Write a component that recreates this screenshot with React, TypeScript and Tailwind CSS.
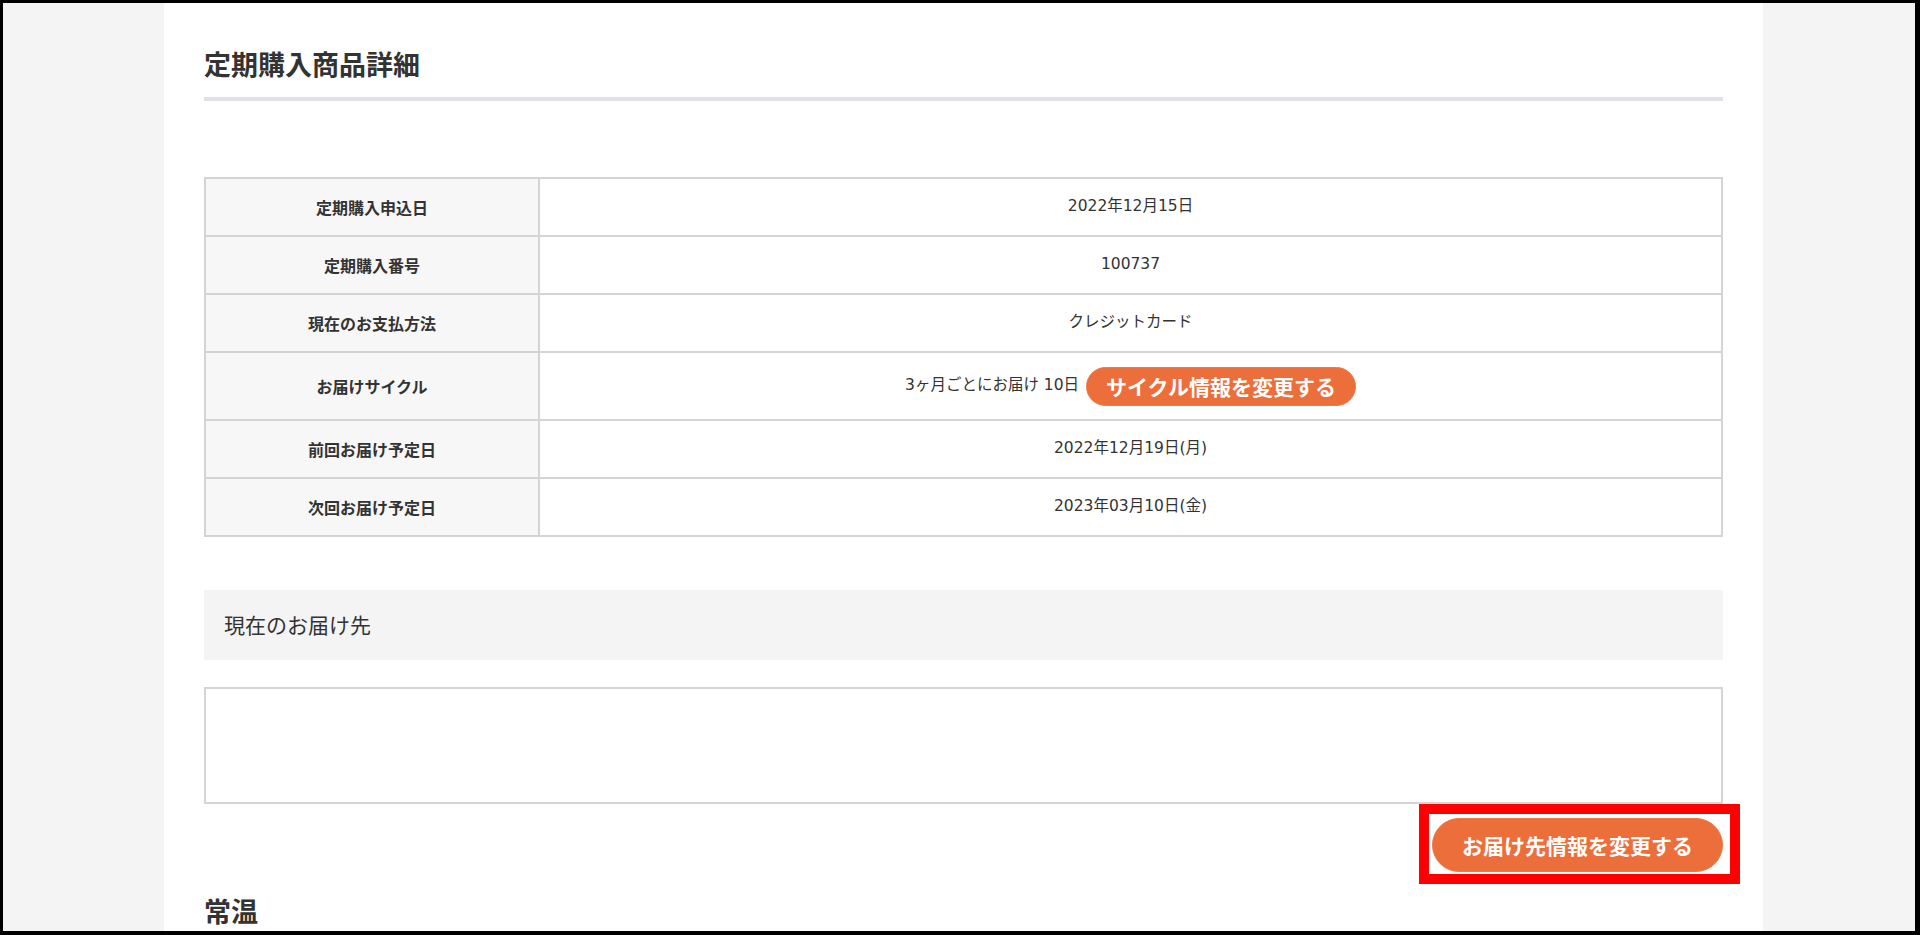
import React from "react";

const rows: { label: string; value: React.ReactNode; tall?: boolean }[] = [
  { label: "定期購入申込日", value: "2022年12月15日" },
  { label: "定期購入番号", value: "100737" },
  { label: "現在のお支払方法", value: "クレジットカード" },
  {
    label: "お届けサイクル",
    tall: true,
    value: (
      <>
        <span>3ヶ月ごとにお届け 10日</span>
        <button className="h-[39px] px-[19px] rounded-full bg-[#ec6e3a] border border-[#ee7a49] text-white font-bold text-[21px] leading-none font-['Noto_Sans_CJK_JP',sans-serif]">
          サイクル情報を変更する
        </button>
      </>
    ),
  },
  { label: "前回お届け予定日", value: "2022年12月19日(月)" },
  { label: "次回お届け予定日", value: "2023年03月10日(金)" },
];

export default function App() {
  return (
    <div className="h-[935px] overflow-hidden border-t-[3px] border-l-[3px] border-r-[5px] border-b-[4px] border-black bg-[#f4f4f4] font-['Noto_Sans_CJK_JP','Noto_Sans',sans-serif] text-[#333]">
      <div className="ml-[161px] w-[1599px] h-full bg-white px-10 pt-[41px]">
        {/* Title */}
        <h1 className="text-[27px] leading-[40px] font-bold pb-[13px] border-b-4 border-[#dfe1e6]">
          定期購入商品詳細
        </h1>

        {/* Detail table */}
        <div className="mt-[76px] border-x-2 border-t-2 border-[#d4d4d4]">
          {rows.map((row) => (
            <div
              key={row.label}
              className={`flex border-b-2 border-[#d4d4d4] ${row.tall ? "h-[68px]" : "h-[58px]"}`}
            >
              <div className="w-[334px] shrink-0 bg-[#f7f7f7] border-r-2 border-[#d4d4d4] flex items-center justify-center text-[16px] font-bold">
                {row.label}
              </div>
              <div className="flex-1 flex items-center justify-center gap-[7px] text-[15.5px] font-['DejaVu_Sans','Noto_Sans_CJK_JP',sans-serif]">
                {row.value}
              </div>
            </div>
          ))}
        </div>

        {/* Current destination */}
        <div className="mt-[53px] h-[70px] bg-[#f4f4f4] flex items-center pl-5 text-[21px]">
          現在のお届け先
        </div>
        <div className="mt-[27px] h-[117px] border-2 border-[#d4d4d4]" />

        <div className="flex justify-end">
          <div className="relative mt-[14px]">
            <button className="h-[54px] px-[29px] rounded-full bg-[#ec6e3a] border border-[#ee7a49] text-white font-bold text-[21px] leading-none">
              お届け先情報を変更する
            </button>
            <span className="pointer-events-none absolute -left-[13px] -right-[17px] -top-[14px] -bottom-[12px] border-[10px] border-[#ff0000]" />
          </div>
        </div>

        <h2 className="mt-[19px] text-[27px] leading-[40px] font-bold">常温</h2>
      </div>
    </div>
  );
}
